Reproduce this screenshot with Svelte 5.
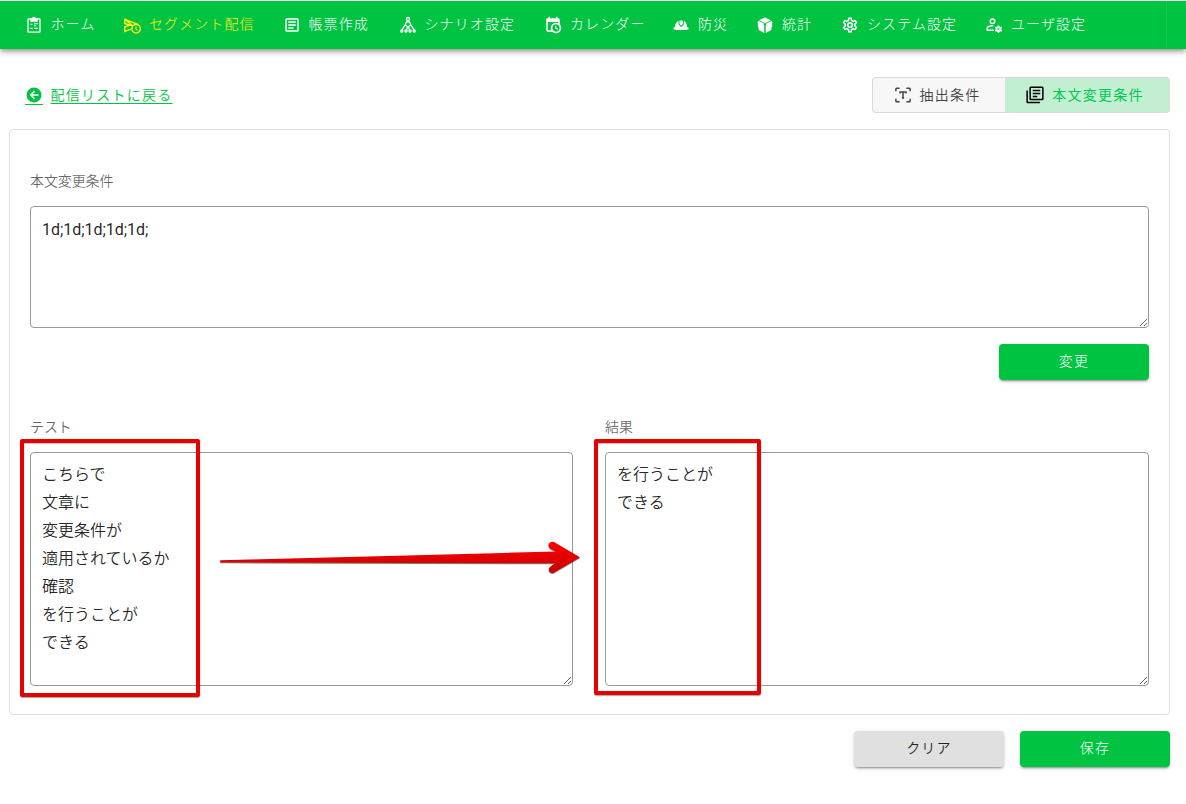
<script>
  const cog =
    'M12,8A4,4 0 0,1 16,12A4,4 0 0,1 12,16A4,4 0 0,1 8,12A4,4 0 0,1 12,8M12,10A2,2 0 0,0 10,12A2,2 0 0,0 12,14A2,2 0 0,0 14,12A2,2 0 0,0 12,10M10,22C9.75,22 9.54,21.82 9.5,21.58L9.13,18.93C8.5,18.68 7.96,18.34 7.44,17.94L4.95,18.95C4.73,19.03 4.46,18.95 4.34,18.73L2.34,15.27C2.21,15.05 2.27,14.78 2.46,14.63L4.57,12.97L4.5,12L4.57,11L2.46,9.37C2.27,9.22 2.21,8.95 2.34,8.73L4.34,5.27C4.46,5.05 4.73,4.96 4.95,5.05L7.44,6.05C7.96,5.66 8.5,5.32 9.13,5.07L9.5,2.42C9.54,2.18 9.75,2 10,2H14C14.25,2 14.46,2.18 14.5,2.42L14.87,5.07C15.5,5.32 16.04,5.66 16.56,6.05L19.05,5.05C19.27,4.96 19.54,5.05 19.66,5.27L21.66,8.73C21.79,8.95 21.73,9.22 21.54,9.37L19.43,11L19.5,12L19.43,13L21.54,14.63C21.73,14.78 21.79,15.05 21.66,15.27L19.66,18.73C19.54,18.95 19.27,19.04 19.05,18.95L16.56,17.95C16.04,18.34 15.5,18.68 14.87,18.93L14.5,21.58C14.46,21.82 14.25,22 14,22H10M11.25,4L10.88,6.61C9.68,6.86 8.62,7.5 7.85,8.39L5.44,7.35L4.69,8.65L6.8,10.2C6.4,11.37 6.4,12.64 6.8,13.8L4.68,15.36L5.43,16.66L7.86,15.62C8.63,16.5 9.68,17.14 10.87,17.38L11.24,20H12.76L13.13,17.39C14.32,17.14 15.37,16.5 16.14,15.62L18.57,16.66L19.32,15.36L17.2,13.81C17.6,12.64 17.6,11.37 17.2,10.2L19.31,8.65L18.56,7.35L16.15,8.39C15.38,7.5 14.32,6.86 13.12,6.62L12.75,4H11.25Z';

  const menu = [
    { icon: 'clipboard', label: 'ホーム' },
    { icon: 'send', label: 'セグメント配信', active: true },
    { icon: 'form', label: '帳票作成' },
    { icon: 'tree', label: 'シナリオ設定' },
    { icon: 'calendar', label: 'カレンダー' },
    { icon: 'helmet', label: '防災' },
    { icon: 'box', label: '統計' },
    { icon: 'cog', label: 'システム設定' },
    { icon: 'user', label: 'ユーザ設定' }
  ];

  let condition = $state('1d;1d;1d;1d;1d;');
  let source = $state('こちらで\n文章に\n変更条件が\n適用されているか\n確認\nを行うことが\nできる');
  let result = $state('を行うことが\nできる');
</script>

{#snippet glyph(name)}
  <svg class="icon" viewBox="0 0 24 24" aria-hidden="true">
    {#if name === 'clipboard'}
      <g fill="none" stroke="currentColor" stroke-width="1.8">
        <rect x="4" y="4" width="16" height="17.500" rx="1" />
        <path d="M7 11h3M7 16.500h3M12 10.300h5M12 13h3M12 16.500h5" stroke-width="1.600" />
      </g>
      <path d="M7 3h2.500a2.600 2.600 0 0 1 5 0H17v4.500H7z" fill="currentColor" />
    {:else if name === 'send'}
      <g fill="none" stroke="currentColor" stroke-width="2">
        <path d="M10.500 17.500L2.500 20.500V14.500L9 12.300 2.500 10V4.500L20.500 11.500M2.500 4.500L12 12.300H8" />
        <circle cx="17.500" cy="17" r="5.600" />
        <path d="M17.300 14v3.500l2.200 1.500" stroke-width="1.600" />
      </g>
    {:else if name === 'form'}
      <path fill="currentColor" d="M5,3C3.89,3 3,3.89 3,5V19C3,20.11 3.89,21 5,21H19C20.11,21 21,20.11 21,19V5C21,3.89 20.11,3 19,3H5M5,5H19V19H5V5M7,7V9H17V7H7M7,11V13H17V11H7M7,15V17H14V15H7Z" />
    {:else if name === 'tree'}
      <g fill="none" stroke="currentColor" stroke-width="1.700">
        <circle cx="12" cy="4" r="2" />
        <path d="M11 6L8 12l-4 6.500M8 12l3.500 2-1.500 4.500M13 6l3 6 4 6.500M16 12l-3.500 2 1.500 4.500M12 6v3" />
        <circle cx="3.700" cy="20" r="1.500" />
        <circle cx="9.300" cy="20" r="1.500" />
        <circle cx="14.700" cy="20" r="1.500" />
        <circle cx="20.300" cy="20" r="1.500" />
      </g>
    {:else if name === 'calendar'}
      <path fill="currentColor" d="M15,13H16.5V15.82L18.94,17.23L18.19,18.53L15,16.69V13M19,8H5V19H9.67C9.24,18.09 9,17.07 9,16A7,7 0 0,1 16,9C17.07,9 18.09,9.24 19,9.67V8M5,21C3.89,21 3,20.1 3,19V5C3,3.89 3.89,3 5,3H6V1H8V3H16V1H18V3H19A2,2 0 0,1 21,5V11.1C22.24,12.36 23,14.09 23,16A7,7 0 0,1 16,23C14.09,23 12.36,22.24 11.1,21H5M16,11.15A4.85,4.85 0 0,0 11.15,16C11.15,18.68 13.32,20.85 16,20.85A4.85,4.85 0 0,0 20.85,16C20.85,13.32 18.68,11.15 16,11.15Z" />
    {:else if name === 'helmet'}
      <path fill="currentColor" d="M10 6h4.500v4.500L12.200 13 10 10.500zM8.700 6.700v4.500L12.200 15l3.600-3.800V6.700c2.800 1.200 4 3.800 4.200 7.800l2 1v2l-4 1H6l-4-1v-2l2-1c.2-4 1.800-6.600 4.700-7.800z" />
    {:else if name === 'box'}
      <path fill="currentColor" d="M12 2L20 5.500L12 9.500L4 5.500zM2.500 8.500L11 12.800V22.500L3.500 18.500V15L2.500 14.500zM21.500 8.500V14.500L20.500 15V18.500L13 22.500V12.800z" />
      <path fill="currentColor" d="M3.500 6.500L11 10.300L9.500 12.500L1.500 8.500zM20.500 6.500L13 10.300L14.500 12.500L22.500 8.500z" />
    {:else if name === 'cog'}
      <path fill="currentColor" d={cog} />
    {:else if name === 'user'}
      <g fill="none" stroke="currentColor" stroke-width="2">
        <circle cx="10" cy="7" r="3" />
        <path d="M11 13H9c-3.500.300-6 1.800-6 3.800V19h9" />
      </g>
      <g fill="none" stroke="currentColor">
        <circle cx="18" cy="17.500" r="2.500" stroke-width="2.400" />
        <path d="M18 12.500v2M18 20.500v2M13.700 15l1.800 1M20.500 19l1.800 1M13.700 20l1.800-1M20.500 16l1.800-1" stroke-width="2" />
      </g>
    {:else if name === 'back'}
      <path fill="currentColor" d="M2,12A10,10 0 0,1 12,2A10,10 0 0,1 22,12A10,10 0 0,1 12,22A10,10 0 0,1 2,12M18,11H10L13.5,7.5L12.08,6.08L6.16,12L12.08,17.92L13.5,16.5L10,13H18V11Z" />
    {:else if name === 'extract'}
      <g fill="none" stroke="currentColor" stroke-width="2">
        <path d="M2.500 7V4q0-1 1-1h4M16.500 3h4q1 0 1 1v3M21.500 17v3q0 1-1 1h-4M7.500 21h-4q-1 0-1-1v-3M8 10V8h8v2M12 8v8M10.500 16h3" />
      </g>
    {:else if name === 'copy'}
      <g fill="none" stroke="currentColor" stroke-width="2">
        <rect x="5.500" y="1.500" width="17" height="16.500" rx="1" />
        <path d="M1.500 6v15q0 1 1 1h16M9 6h10M9 10h10M9 14h6" />
      </g>
    {/if}
  </svg>
{/snippet}

<div class="page">
  <header>
    <nav>
      {#each menu as item}
        <a class:active={item.active}>{@render glyph(item.icon)}<span>{item.label}</span></a>
      {/each}
    </nav>
  </header>

  <main>
    <div class="toolbar">
      <a class="back">{@render glyph('back')}<span>配信リストに戻る</span></a>
      <div class="tabs">
        <button class="tab">{@render glyph('extract')}<span>抽出条件</span></button>
        <button class="tab selected">{@render glyph('copy')}<span>本文変更条件</span></button>
      </div>
    </div>

    <section class="card">
      <div class="field">
        <label for="condition">本文変更条件</label>
        <textarea id="condition" class="short" spellcheck="false" bind:value={condition}></textarea>
      </div>
      <div class="submit"><button class="btn green">変更</button></div>
      <div class="pair">
        <div class="field">
          <label for="source">テスト</label>
          <textarea id="source" spellcheck="false" bind:value={source}></textarea>
          <i class="mark first"></i>
        </div>
        <div class="field">
          <label for="result">結果</label>
          <textarea id="result" spellcheck="false" bind:value={result}></textarea>
          <i class="mark second"></i>
        </div>
        <svg class="arrow" width="370" height="44" viewBox="0 0 370 44" aria-hidden="true">
          <defs>
            <linearGradient id="red" x1="0" y1="0" x2="0" y2="1">
              <stop offset="0.2" stop-color="#f80000" />
              <stop offset="0.8" stop-color="#cf0000" />
            </linearGradient>
          </defs>
          <path d="M4.500 21.300L340 12.500L334.500 9.800Q331.500 7.500 333 4.500Q335 2 338 3L364 18.200L338 33.500Q335 35 333 32Q332 29.300 334.500 27.500L339 24.300L4.500 23.300Q3.500 22 4.500 21.300Z" fill="url(#red)" />
        </svg>
      </div>
    </section>

    <footer>
      <button class="btn grey">クリア</button>
      <button class="btn green">保存</button>
    </footer>
  </main>
</div>

<style>
  :global(body) {
    margin: 0;
    background: #fff;
  }
  .page {
    height: 804px;
    overflow: hidden;
    font-family: Roboto, 'Noto Sans CJK JP', sans-serif;
    font-weight: 300;
    color: rgba(0, 0, 0, 0.87);
  }
  .icon {
    width: 18px;
    height: 18px;
    flex: none;
  }
  header {
    box-sizing: border-box;
    height: 49px;
    border-top: 1px solid #eee;
    padding-right: 19px;
    background: #00c341;
    box-shadow: 0 2px 4px -1px rgba(0, 0, 0, 0.3), 0 4px 5px rgba(0, 0, 0, 0.14), 0 1px 10px rgba(0, 0, 0, 0.12);
  }
  nav {
    display: grid;
    grid-template-columns: 98.500px 159.500px 116px 145.500px 128px 84px 85px 144px 1fr;
    height: 48px;
    padding-left: 24.500px;
    border-right: 1px solid #14c850;
    color: #fff;
  }
  nav a,
  .back,
  .tab {
    display: flex;
    align-items: center;
    gap: 8px;
    font-size: 14px;
    letter-spacing: 1.25px;
    white-space: nowrap;
  }
  nav span {
    padding-bottom: 4px;
    letter-spacing: 1.100px;
  }
  nav a.active {
    color: #f8ee1c;
  }
  main {
    padding: 28px 16px 0 9px;
  }
  .toolbar {
    display: flex;
    justify-content: space-between;
    height: 36px;
    padding-left: 15.500px;
  }
  .back {
    color: #00c341;
  }
  .back .icon {
    border-bottom: 1px solid #00c341;
    margin-top: 1px;
  }
  .back span {
    padding-bottom: 3px;
    font-weight: 350;
    text-decoration: underline;
    text-underline-offset: 3px;
  }
  .tabs {
    display: flex;
  }
  .tab {
    box-sizing: border-box;
    width: 133px;
    height: 36px;
    justify-content: center;
    border: 1px solid #dadada;
    border-right: 0;
    border-radius: 4px 0 0 4px;
    padding: 0 4px 0 0;
    background: #f7f7f7;
    color: #444;
    font-family: inherit;
    font-weight: 350;
  }
  .tab span {
    padding-bottom: 3px;
  }
  .tab.selected {
    width: 165px;
    border: 1px solid #d4ddd7;
    border-left: 0;
    border-radius: 0 4px 4px 0;
    background: #c2eed2;
    color: #00c853;
    font-weight: 400;
  }
  .tab.selected .icon {
    color: #000;
  }
  .card {
    box-sizing: border-box;
    height: 586px;
    margin-top: 16px;
    border: 1px solid #e0e0e0;
    border-radius: 4px;
    padding: 41px 20px 0;
  }
  .field {
    position: relative;
    display: flex;
    flex-direction: column;
    gap: 15px;
  }
  label {
    height: 20px;
    line-height: 20px;
    font-size: 14px;
    font-weight: 350;
    letter-spacing: -0.100px;
    color: rgba(0, 0, 0, 0.6);
  }
  textarea {
    box-sizing: border-box;
    width: 100%;
    height: 234px;
    margin: 0;
    border: 1px solid #999;
    border-radius: 4px;
    padding: 8px 11px;
    outline: 0;
    resize: vertical;
    background: transparent;
    color: rgba(0, 0, 0, 0.87);
    font: 350 16px/28px Roboto, 'Noto Sans CJK JP', sans-serif;
  }
  textarea.short {
    height: 122px;
    padding-top: 9px;
    font-weight: 400;
    letter-spacing: -0.050px;
  }
  .submit {
    display: flex;
    justify-content: flex-end;
    margin-top: 16px;
  }
  .btn {
    width: 150px;
    height: 36px;
    border: 0;
    border-radius: 4px;
    padding: 0 0 1px;
    font: 300 14px/35px Roboto, 'Noto Sans CJK JP', sans-serif;
    letter-spacing: 1.25px;
    box-shadow: 0 3px 1px -2px rgba(0, 0, 0, 0.2), 0 2px 2px rgba(0, 0, 0, 0.14), 0 1px 5px rgba(0, 0, 0, 0.12);
  }
  .green {
    background: #00c341;
    color: #fff;
  }
  .grey {
    background: #e0e0e0;
    color: rgba(0, 0, 0, 0.87);
    font-weight: 350;
  }
  .pair {
    position: relative;
    display: grid;
    grid-template-columns: 543px 544px;
    gap: 32px;
    margin-top: 37px;
  }
  .mark {
    position: absolute;
    box-sizing: border-box;
    border: 4px solid #e60000;
    border-radius: 2px;
    pointer-events: none;
    box-shadow: 0 1px 1px rgba(0, 0, 0, 0.35), inset 0 1px 1px rgba(0, 0, 0, 0.25);
  }
  .first {
    left: -10px;
    top: 22px;
    width: 180px;
    height: 258px;
  }
  .second {
    left: -11px;
    top: 22px;
    width: 167px;
    height: 256px;
  }
  .arrow {
    position: absolute;
    left: 186px;
    top: 122px;
    pointer-events: none;
    filter: drop-shadow(0 1px 0.5px rgba(0, 0, 0, 0.5));
  }
  footer {
    display: flex;
    justify-content: flex-end;
    gap: 16px;
    margin-top: 16px;
  }
</style>
